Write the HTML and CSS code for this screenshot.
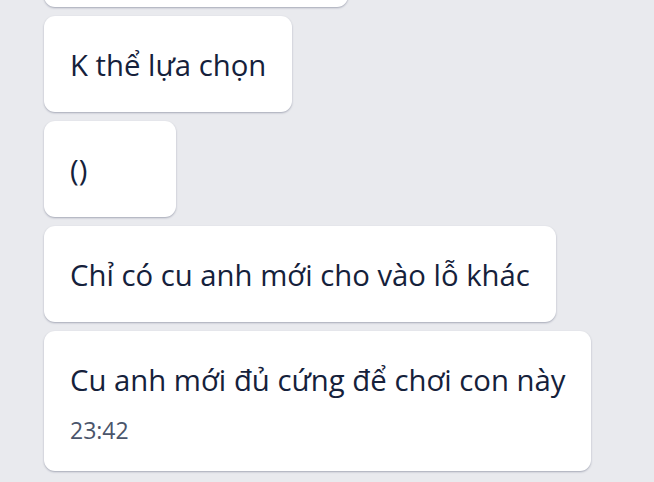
FILE: index.html
```html
<!DOCTYPE html>
<html lang="vi">
<head>
<meta charset="utf-8">
<link rel="stylesheet" href="styles.css">
</head>
<body>
<div class="chat">
  <div class="bubble top-cut"><p class="msg">&nbsp;</p></div>
  <div class="bubble"><p class="msg">K thể lựa chọn</p></div>
  <div class="bubble narrow"><p class="msg">()</p></div>
  <div class="bubble"><p class="msg">Chỉ có cu anh mới cho vào lỗ khác</p></div>
  <div class="bubble"><p class="msg">Cu anh mới đủ cứng để chơi con này</p><p class="time">23:42</p></div>
</div>
</body>
</html>
```
FILE: styles.css
```css
html, body {
  margin: 0;
  padding: 0;
  background: #e9eaee;
  height: 100%;
  overflow: hidden;
}
.chat {
  display: flex;
  flex-direction: column;
  align-items: flex-start;
  gap: 9px;
  padding-left: 44px;
  margin-top: -89px;
  font-family: "Open Sans", "Noto Sans", sans-serif;
}
.bubble {
  background: #fff;
  border-radius: 11px;
  box-shadow: 0 1px 2px rgba(40, 50, 80, 0.35);
  padding: 29px 26px 27px;
}
.top-cut {
  width: 252px;
}
.narrow {
  width: 80px;
}
.msg {
  margin: 0;
  font-size: 29.3px;
  line-height: 40px;
  color: #15213b;
}
.time {
  margin: 16px 0 0;
  font-size: 23px;
  line-height: 28px;
  color: #4a556b;
}
```
